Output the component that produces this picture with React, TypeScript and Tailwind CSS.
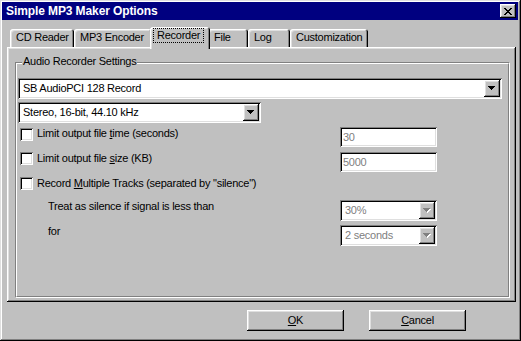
import React from "react";

// Win95-ish bevels, written out so tailwind picks them up
const winFrame =
  "shadow-[inset_-1px_-1px_0_#000,inset_1px_1px_0_#dfdfdf,inset_-2px_-2px_0_#808080,inset_2px_2px_0_#fff]";
const raised =
  "shadow-[inset_-1px_-1px_0_#000,inset_1px_1px_0_#fff,inset_-2px_-2px_0_#808080,inset_2px_2px_0_#dfdfdf]";
const sunken =
  "shadow-[inset_1px_1px_0_#808080,inset_-1px_-1px_0_#fff,inset_2px_2px_0_#000,inset_-2px_-2px_0_#dfdfdf]";
const tabEdge =
  "shadow-[inset_1px_1px_0_#fff,inset_-1px_0_0_#000,inset_-2px_0_0_#808080,inset_2px_2px_0_#dfdfdf]";

type TTab = { label: string; width: string; selected?: boolean };

const tabs: TTab[] = [
  { label: "CD Reader", width: "w-[64px]" },
  { label: "MP3 Encoder", width: "w-[78px]" },
  { label: "Recorder", width: "w-[60px]", selected: true },
  { label: "File", width: "w-[40px]" },
  { label: "Log", width: "w-[42px]" },
  { label: "Customization", width: "w-[78px]" },
];

const CloseButton = () => (
  <div className={`w-[16px] h-[14px] bg-[#c0c0c0] flex items-center justify-center ${raised}`}>
    <svg width="8" height="7" viewBox="0 0 8 7" shapeRendering="crispEdges">
      <path
        fill="#000"
        d="M0 0h2v1H0zM6 0h2v1H6zM1 1h2v1H1zM5 1h2v1H5zM2 2h4v1H2zM3 3h2v1H3zM2 4h4v1H2zM1 5h2v1H1zM5 5h2v1H5zM0 6h2v1H0zM6 6h2v1H6z"
      />
    </svg>
  </div>
);

const Arrow = ({ disabled }: { disabled?: boolean }) => (
  <svg width="8" height="5" viewBox="0 0 8 5" shapeRendering="crispEdges">
    {disabled && <path fill="#fff" d="M1 1h7v1H1zM2 2h5v1H2zM3 3h3v1H3zM4 4h1v1H4z" />}
    <path fill={disabled ? "#808080" : "#000"} d="M0 0h7v1H0zM1 1h5v1H1zM2 2h3v1H2zM3 3h1v1H3z" />
  </svg>
);

const Combo = ({ value, width, disabled }: { value: string; width: string; disabled?: boolean }) => (
  <div className={`${width} h-[21px] bg-white p-[2px] flex items-stretch ${sunken}`}>
    <div className={`flex-1 pl-[3px] flex items-center ${disabled ? "text-[#808080]" : ""}`}>{value}</div>
    <div className={`w-[16px] bg-[#c0c0c0] flex items-center justify-center ${raised}`}>
      <Arrow disabled={disabled} />
    </div>
  </div>
);

const Edit = ({ value }: { value: string }) => (
  <div className={`w-[97px] h-[20px] bg-white pl-[3px] flex items-center text-[#808080] ${sunken}`}>{value}</div>
);

const Checkbox = () => <span className={`block shrink-0 w-[13px] h-[13px] bg-white ${sunken}`} />;

const Button = ({ children }: { children: React.ReactNode }) => (
  <div className={`w-[97px] h-[21px] bg-[#c0c0c0] flex items-center justify-center ${raised}`}>{children}</div>
);

export default function App() {
  return (
    <div
      className={`w-[521px] h-[341px] bg-[#c0c0c0] flex flex-col p-[2px] pr-[3px] pb-[3px] text-[11px] leading-[13px] tracking-[-0.25px] text-black font-['Liberation_Sans',Arial,sans-serif] ${winFrame}`}
    >
      <div className="h-[18px] shrink-0 bg-[#000080] flex items-center justify-between pl-[4px] pr-[2px]">
        <span className="text-white font-bold text-[12px] tracking-[-0.1px]">Simple MP3 Maker Options</span>
        <CloseButton />
      </div>

      <div className="flex items-end h-[20px] mt-[7px] ml-[8px]">
        {tabs.map((t) =>
          t.selected ? (
            <div
              key={t.label}
              className={`${t.width} h-[22px] -mx-[2px] -mb-[2px] relative z-10 bg-[#c0c0c0] rounded-t-[3px] pl-[3px] pt-[1px] ${tabEdge}`}
            >
              <span className="inline-block border border-dotted border-black px-[3px]">{t.label}</span>
            </div>
          ) : (
            <div key={t.label} className={`${t.width} h-[18px] bg-[#c0c0c0] rounded-t-[3px] pl-[6px] pt-[2px] ${tabEdge}`}>
              {t.label}
            </div>
          ),
        )}
      </div>

      <div className="ml-[5px] w-[509px] h-[255px] shrink-0 p-[2px] shadow-[inset_-1px_-1px_0_#000,inset_1px_1px_0_#fff,inset_-2px_-2px_0_#808080,inset_2px_2px_0_#dfdfdf]">
        <div className="relative ml-[6px] mt-[13px] w-[495px] h-[236px] border border-t-[#808080] border-l-[#808080] border-r-white border-b-white">
          <span className="absolute left-[6px] -top-[8px] px-[1px] bg-[#c0c0c0]">Audio Recorder Settings</span>
          <div className="h-full border border-t-white border-l-white border-r-[#808080] border-b-[#808080] pl-[1px] pt-[14px]">
            <Combo value="SB AudioPCI 128 Record" width="w-[484px]" />
            <div className="mt-[3px]">
              <Combo value="Stereo, 16-bit, 44.10 kHz" width="w-[243px]" />
            </div>

            <div className="flex flex-col mt-[4px] -ml-[1px]">
              <div className="flex items-start h-[25px]">
                <div className="w-[323px] flex items-start pl-[3px]">
                  <span className="mt-[1px]">
                    <Checkbox />
                  </span>
                  <span className="ml-[4px]">
                    Limit output file <span className="underline">t</span>ime (seconds)
                  </span>
                </div>
                <Edit value="30" />
              </div>
              <div className="flex items-start h-[25px]">
                <div className="w-[323px] flex items-start pl-[3px]">
                  <Checkbox />
                  <span className="ml-[4px]">
                    Limit output file <span className="underline">s</span>ize (KB)
                  </span>
                </div>
                <Edit value="5000" />
              </div>
              <div className="flex items-start h-[23px] pl-[3px]">
                <Checkbox />
                <span className="ml-[4px]">
                  Record <span className="underline">M</span>ultiple Tracks (separated by "silence")
                </span>
              </div>
              <div className="flex items-start h-[25px]">
                <div className="w-[323px] pl-[31px]">Treat as silence if signal is less than</div>
                <Combo value="30%" width="w-[97px]" disabled />
              </div>
              <div className="flex items-start h-[25px]">
                <div className="w-[323px] pl-[31px]">for</div>
                <Combo value="2 seconds" width="w-[97px]" disabled />
              </div>
            </div>
          </div>
        </div>
      </div>

      <div className="flex justify-end gap-[25px] pr-[52px] mt-[8px]">
        <Button>
          <span className="underline">O</span>K
        </Button>
        <Button>
          <span className="underline">C</span>ancel
        </Button>
      </div>
    </div>
  );
}
